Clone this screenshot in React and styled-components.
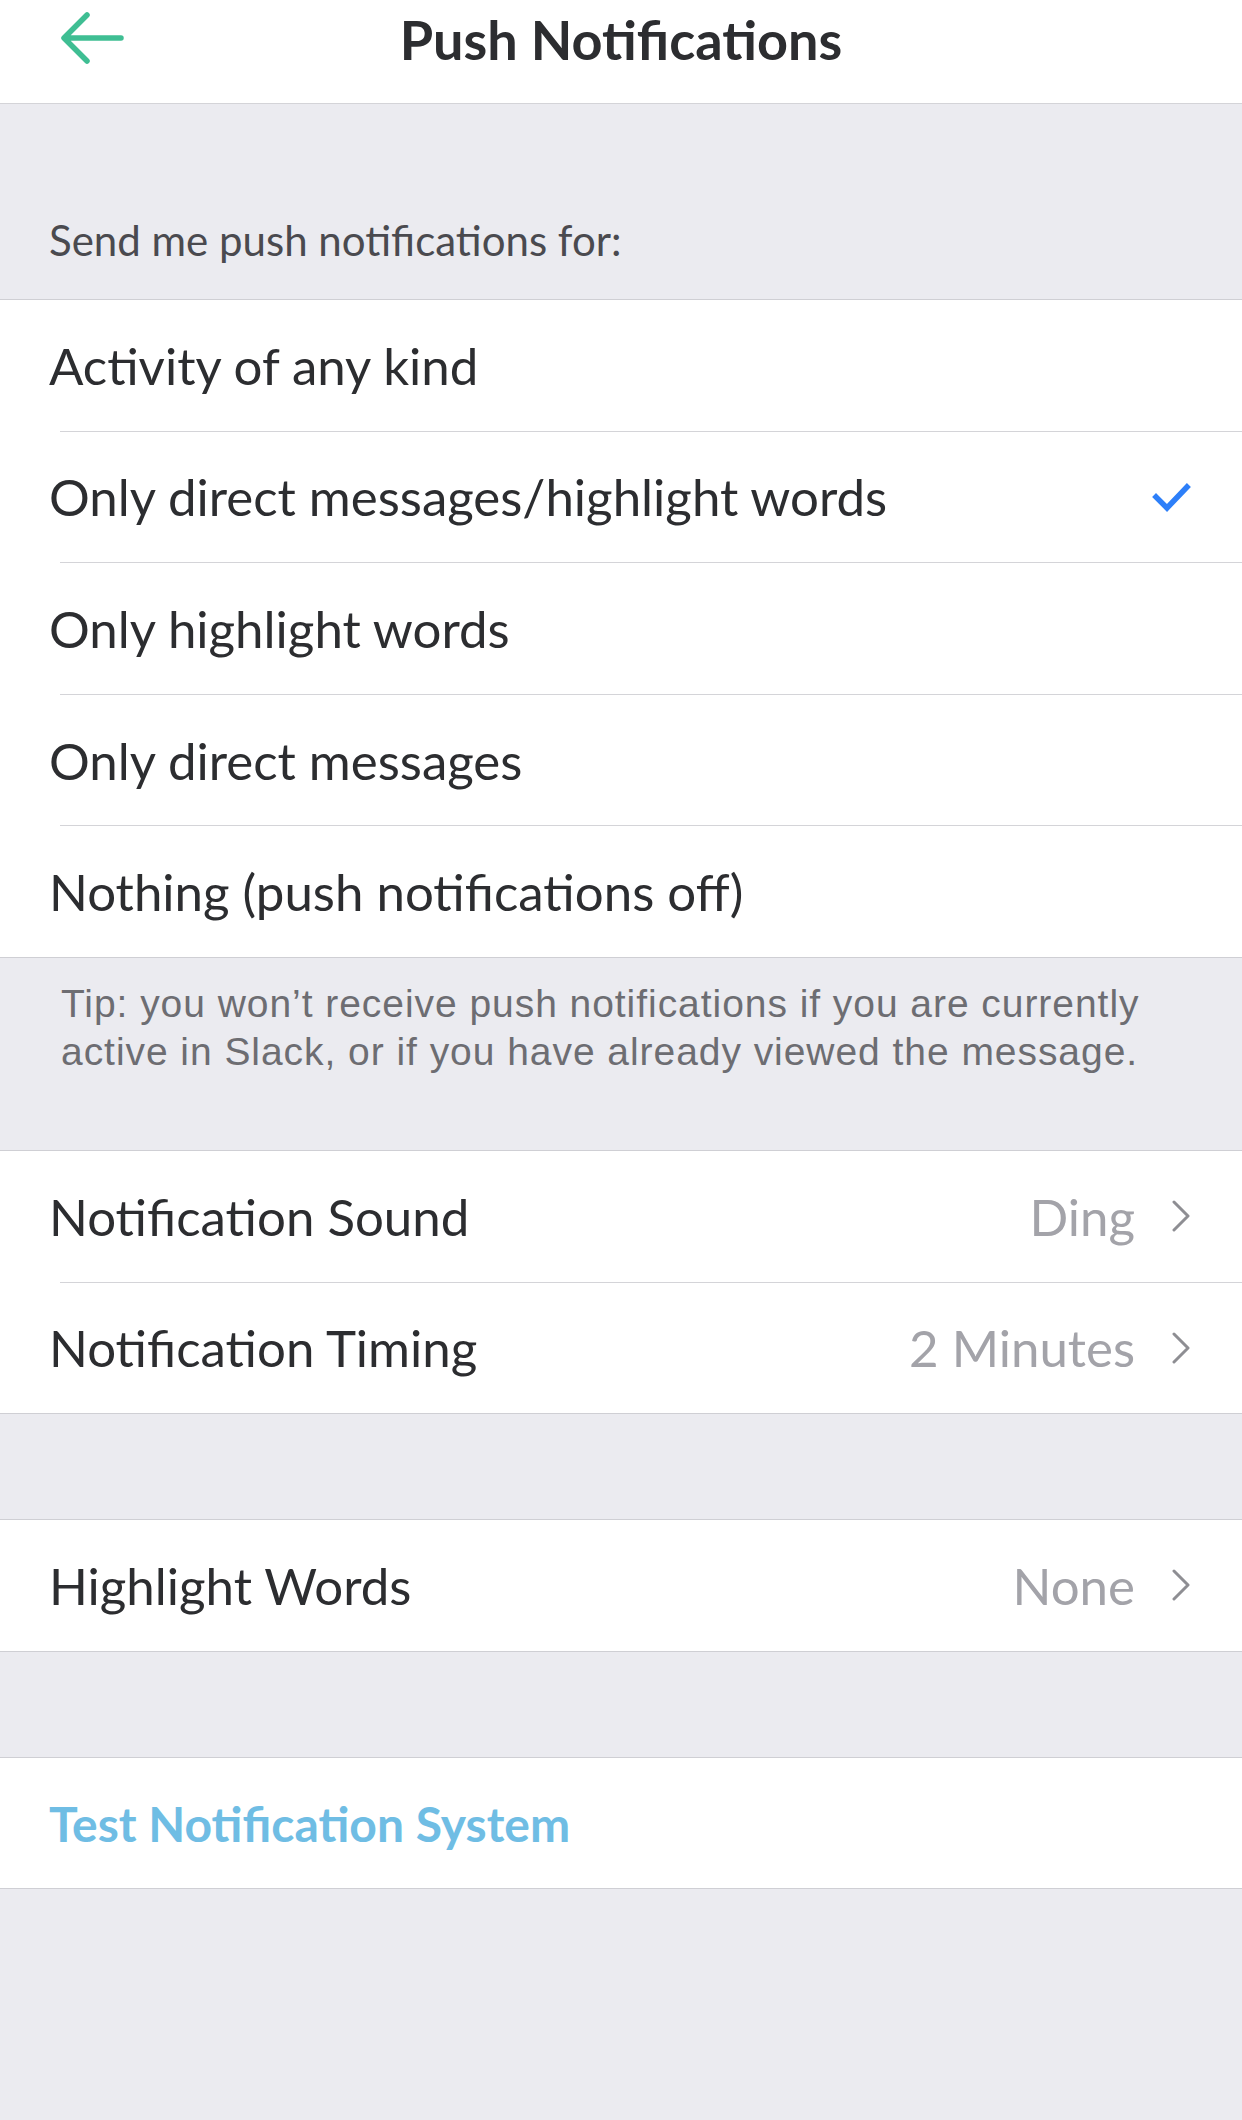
import React from 'react';
import styled, { createGlobalStyle } from 'styled-components';

const GlobalStyle = createGlobalStyle`
  body {
    margin: 0;
    background: #ebebf0;
    font-family: 'Lato', 'Noto Sans', sans-serif;
    -webkit-font-smoothing: antialiased;
  }
`;

const Page = styled.div`
  display: flex;
  flex-direction: column;
  min-height: 2120px;
  background: #ebebf0;
`;

const Header = styled.header`
  display: flex;
  align-items: center;
  justify-content: center;
  position: relative;
  height: 103px;
  background: #fff;
  border-bottom: 1px solid #d4d4d8;
`;

const BackButton = styled.button`
  position: absolute;
  left: 56px;
  top: 8px;
  width: 72px;
  height: 60px;
  padding: 0;
  border: 0;
  background: none;
  display: flex;
  align-items: center;
  justify-content: center;
`;

const Title = styled.h1`
  margin: 0 0 24px;
  font-size: 54px;
  font-weight: 700;
  color: #2c2d30;
`;

const SectionLabel = styled.div`
  height: 195px;
  box-sizing: border-box;
  display: flex;
  align-items: flex-end;
  padding: 0 49px 34px;
  font-size: 42px;
  line-height: 50px;
  color: #4a4a4f;
`;

const Spacer = styled.div`
  height: ${p => p.$h}px;
`;

const Group = styled.section`
  background: #fff;
  border-top: 1px solid #cfcfd4;
  border-bottom: 1px solid #cfcfd4;
`;

const Row = styled.div`
  display: flex;
  align-items: center;
  height: 130.6px;
  padding: 0 51px 0 49px;
`;

const Label = styled.span`
  flex: 1;
  font-size: ${p => (p.$accent ? 48 : 51)}px;
  color: ${p => (p.$accent ? '#6fbde4' : '#2c2d30')};
  font-weight: ${p => (p.$accent ? 700 : 400)};
`;

const Value = styled.span`
  font-size: 51px;
  color: #a3a3a9;
  margin-right: 36px;
`;

const Separator = styled.div`
  height: 1px;
  margin-left: 60px;
  background: #d4d4d8;
`;

const Tip = styled.p`
  margin: 0;
  height: 192px;
  box-sizing: border-box;
  padding: 22px 50px 0 61px;
  font-family: 'Liberation Sans', Arial, sans-serif;
  font-size: 39px;
  letter-spacing: 0.95px;
  line-height: 48px;
  color: #6d6d72;
`;

const BackArrow = () => (
  <svg width="66" height="54" viewBox="0 0 66 54" fill="none">
    <path d="M62 27H6M28 4L5 27l23 23" stroke="#3fbe93" strokeWidth="5.5" strokeLinecap="round" strokeLinejoin="round" />
  </svg>
);

const Check = () => (
  <svg width="40" height="32" viewBox="0 0 40 32" fill="none">
    <path d="M5 16l11 11L36 6" stroke="#2d7ff9" strokeWidth="5.5" strokeLinecap="square" strokeLinejoin="miter" />
  </svg>
);

const Chevron = () => (
  <svg width="20" height="32" viewBox="0 0 20 32" fill="none">
    <path d="M3 2l14 14L3 30" stroke="#8e8e93" strokeWidth="3" strokeLinecap="round" strokeLinejoin="round" />
  </svg>
);

const options = [
  'Activity of any kind',
  'Only direct messages/highlight words',
  'Only highlight words',
  'Only direct messages',
  'Nothing (push notifications off)',
];

const selected = 1;

export default function App() {
  return (
    <Page>
      <GlobalStyle />
      <Header>
        <BackButton aria-label="Back"><BackArrow /></BackButton>
        <Title>Push Notifications</Title>
      </Header>

      <SectionLabel>Send me push notifications for:</SectionLabel>

      <Group>
        {options.map((opt, i) => (
          <React.Fragment key={opt}>
            {i > 0 && <Separator />}
            <Row>
              <Label>{opt}</Label>
              {i === selected && <Check />}
            </Row>
          </React.Fragment>
        ))}
      </Group>

      <Tip>
        Tip: you won’t receive push notifications if you are currently active in Slack, or if you have already viewed the message.
      </Tip>

      <Group>
        <Row>
          <Label>Notification Sound</Label>
          <Value>Ding</Value>
          <Chevron />
        </Row>
        <Separator />
        <Row>
          <Label>Notification Timing</Label>
          <Value>2 Minutes</Value>
          <Chevron />
        </Row>
      </Group>

      <Spacer $h={105} />

      <Group>
        <Row>
          <Label>Highlight Words</Label>
          <Value>None</Value>
          <Chevron />
        </Row>
      </Group>

      <Spacer $h={105} />

      <Group>
        <Row>
          <Label $accent>Test Notification System</Label>
        </Row>
      </Group>
    </Page>
  );
}
